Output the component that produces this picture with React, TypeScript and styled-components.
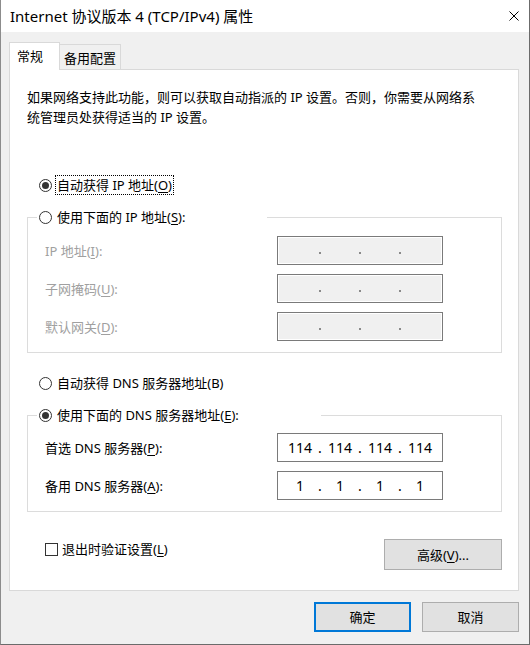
import React from "react";
import styled, { createGlobalStyle } from "styled-components";

const Global = createGlobalStyle`
  html, body { margin: 0; padding: 0; background: #ffffff; }
  body {
    font-family: "Noto Sans", "Noto Sans CJK SC", sans-serif;
    font-size: 13px;
    color: #000;
  }
  * { box-sizing: border-box; }
`;

const Window = styled.div`
  width: 530px;
  height: 645px;
  display: flex;
  flex-direction: column;
  background: #f0f0f0;
  border-left: 1px solid #8c8c8c;
  border-right: 1px solid #6b6b6b;
  border-bottom: 1px solid #6b6b6b;
  overflow: hidden;
`;

const TitleBar = styled.div`
  height: 32px;
  flex: none;
  background: #ffffff;
  display: flex;
  align-items: center;
  justify-content: space-between;
  padding-left: 9px;
`;

const Title = styled.div`
  font-size: 15px;
  line-height: 20px;
  white-space: nowrap;
`;

const CloseBtn = styled.div`
  width: 31px;
  height: 32px;
  display: flex;
  align-items: center;
  justify-content: center;
`;

const Body = styled.div`
  flex: 1;
  display: flex;
  flex-direction: column;
  padding: 10px 10px 0 8px;
`;

const TabStrip = styled.div`
  display: flex;
  align-items: flex-end;
`;

const Tab = styled.div<{ $active?: boolean }>`
  position: relative;
  z-index: ${(p) => (p.$active ? 1 : 0)};
  line-height: 20px;
  white-space: nowrap;
  background: ${(p) => (p.$active ? "#ffffff" : "#f0f0f0")};
  border-top: 1px solid #d9d9d9;
  border-right: 1px solid #d9d9d9;
  border-left: ${(p) => (p.$active ? "1px solid #d9d9d9" : "none")};
  height: ${(p) => (p.$active ? "28px" : "25px")};
  margin-bottom: ${(p) => (p.$active ? "-1px" : "0")};
  width: ${(p) => (p.$active ? "51px" : "61px")};
  padding: ${(p) => (p.$active ? "3px 0 0 7px" : "3px 0 0 0")};
  text-align: ${(p) => (p.$active ? "left" : "center")};
`;

const Panel = styled.div`
  background: #ffffff;
  border: 1px solid #d9d9d9;
  padding: 17px 16px 20px 17px;
  display: flex;
  flex-direction: column;
`;

const Description = styled.p`
  margin: 0;
  line-height: 20px;
`;

const RadioRow = styled.div<{ $mt: number }>`
  display: flex;
  align-items: center;
  height: 20px;
  margin-top: ${(p) => p.$mt}px;
  padding-left: 12px;
`;

const RadioCircle = styled.span<{ $checked?: boolean }>`
  width: 13px;
  height: 13px;
  flex: none;
  border-radius: 50%;
  border: 1px solid #333333;
  background: #ffffff;
  margin-right: 3px;
  display: grid;
  place-items: center;
  &::after {
    content: "";
    width: 7px;
    height: 7px;
    border-radius: 50%;
    background: ${(p) => (p.$checked ? "#333333" : "transparent")};
  }
`;

const OptionText = styled.span<{ $focus?: boolean }>`
  border: 1px dotted ${(p) => (p.$focus ? "#000000" : "transparent")};
  padding: 0 1px;
  line-height: 18px;
  white-space: nowrap;
`;

const Key = styled.u`
  text-decoration: underline;
  text-underline-offset: 2px;
  text-decoration-thickness: 1px;
`;

const Group = styled.fieldset<{ $mt: number }>`
  margin: ${(p) => p.$mt}px 0 0 0;
  padding: 0;
  min-width: 0;
  border: 1px solid #dcdcdc;
`;

const Legend = styled.legend<{ $w: number }>`
  margin-left: 9px;
  padding: 0 0 0 2px;
  width: ${(p) => p.$w}px;
  height: 22px;
  display: flex;
  align-items: center;
`;

const GroupGrid = styled.div<{ $pt: number }>`
  display: grid;
  grid-template-columns: 232px 166px;
  row-gap: 9px;
  align-items: center;
  padding: ${(p) => p.$pt}px 0 11px 17px;
`;

const FieldLabel = styled.span<{ $disabled?: boolean }>`
  color: ${(p) => (p.$disabled ? "#a0a0a0" : "#000000")};
  line-height: 20px;
  white-space: nowrap;
`;

const AddrBox = styled.div<{ $disabled?: boolean }>`
  width: 166px;
  height: 29px;
  border: 1px solid #7a7a7a;
  background: ${(p) => (p.$disabled ? "#f0f0f0" : "#ffffff")};
  box-shadow: ${(p) => (p.$disabled ? "inset 0 0 0 1px #ffffff" : "none")};
  display: flex;
  align-items: center;
  padding-left: 5px;
  font-size: 14px;
`;

const Octet = styled.span`
  width: 34px;
  text-align: center;
  line-height: 20px;
`;

const Sep = styled.span`
  width: 6px;
  text-align: center;
  line-height: 20px;
`;

const DimDot = styled.span`
  width: 2px;
  height: 2px;
  margin: 4px 2px 0 2px;
  background: #8a8a8a;
`;

const BottomRow = styled.div`
  display: flex;
  justify-content: space-between;
  align-items: flex-start;
  margin-top: 27px;
  padding-left: 18px;
`;

const CheckLabel = styled.label`
  display: flex;
  align-items: center;
  gap: 4px;
  height: 20px;
  margin-top: 0;
  line-height: 20px;
`;

const CheckBox = styled.span`
  width: 13px;
  height: 13px;
  border: 1px solid #333333;
  background: #ffffff;
  flex: none;
`;

const Button = styled.div<{ $w: number; $h: number; $default?: boolean }>`
  width: ${(p) => p.$w}px;
  height: ${(p) => p.$h}px;
  background: #e1e1e1;
  border: ${(p) => (p.$default ? "2px solid #0078d7" : "1px solid #adadad")};
  display: flex;
  align-items: center;
  justify-content: center;
  line-height: 20px;
  white-space: nowrap;
`;

const DialogButtons = styled.div`
  display: flex;
  justify-content: flex-end;
  gap: 11px;
  margin-top: 11px;
`;

const Address: React.FC<{ values?: string[] }> = ({ values }) => {
  if (!values) {
    return (
      <AddrBox $disabled>
        <Octet />
        <DimDot />
        <Octet />
        <DimDot />
        <Octet />
        <DimDot />
        <Octet />
      </AddrBox>
    );
  }
  return (
    <AddrBox>
      {values.map((v, i) => (
        <React.Fragment key={i}>
          {i > 0 && <Sep>.</Sep>}
          <Octet>{v}</Octet>
        </React.Fragment>
      ))}
    </AddrBox>
  );
};

export default function App() {
  return (
    <>
      <Global />
      <Window>
        <TitleBar>
          <Title>Internet 协议版本 4 (TCP/IPv4) 属性</Title>
          <CloseBtn>
            <svg width="10" height="10" viewBox="0 0 10 10">
              <path d="M0.5 0.5 L9.5 9.5 M9.5 0.5 L0.5 9.5" stroke="#000" strokeWidth="1" fill="none" />
            </svg>
          </CloseBtn>
        </TitleBar>
        <Body>
          <TabStrip>
            <Tab $active>常规</Tab>
            <Tab>备用配置</Tab>
          </TabStrip>
          <Panel>
            <Description>
              如果网络支持此功能，则可以获取自动指派的 IP 设置。否则，你需要从网络系
              <br />
              统管理员处获得适当的 IP 设置。
            </Description>

            <RadioRow $mt={48}>
              <RadioCircle $checked />
              <OptionText $focus>
                自动获得 IP 地址(<Key>O</Key>)
              </OptionText>
            </RadioRow>

            <Group $mt={11}>
              <Legend $w={230}>
                <RadioCircle />
                <OptionText>
                  使用下面的 IP 地址(<Key>S</Key>):
                </OptionText>
              </Legend>
              <GroupGrid $pt={8}>
                <FieldLabel $disabled>
                  IP 地址(<Key>I</Key>):
                </FieldLabel>
                <Address />
                <FieldLabel $disabled>
                  子网掩码(<Key>U</Key>):
                </FieldLabel>
                <Address />
                <FieldLabel $disabled>
                  默认网关(<Key>D</Key>):
                </FieldLabel>
                <Address />
              </GroupGrid>
            </Group>

            <RadioRow $mt={20}>
              <RadioCircle />
              <OptionText>自动获得 DNS 服务器地址(B)</OptionText>
            </RadioRow>

            <Group $mt={11}>
              <Legend $w={284}>
                <RadioCircle $checked />
                <OptionText>
                  使用下面的 DNS 服务器地址(<Key>E</Key>):
                </OptionText>
              </Legend>
              <GroupGrid $pt={7}>
                <FieldLabel>
                  首选 DNS 服务器(<Key>P</Key>):
                </FieldLabel>
                <Address values={["114", "114", "114", "114"]} />
                <FieldLabel>
                  备用 DNS 服务器(<Key>A</Key>):
                </FieldLabel>
                <Address values={["1", "1", "1", "1"]} />
              </GroupGrid>
            </Group>

            <BottomRow>
              <CheckLabel>
                <CheckBox />
                <span>
                  退出时验证设置(<Key>L</Key>)
                </span>
              </CheckLabel>
              <Button $w={118} $h={31}>
                高级(<Key>V</Key>)...
              </Button>
            </BottomRow>
          </Panel>
          <DialogButtons>
            <Button $w={97} $h={30} $default>
              确定
            </Button>
            <Button $w={97} $h={30}>
              取消
            </Button>
          </DialogButtons>
        </Body>
      </Window>
    </>
  );
}
